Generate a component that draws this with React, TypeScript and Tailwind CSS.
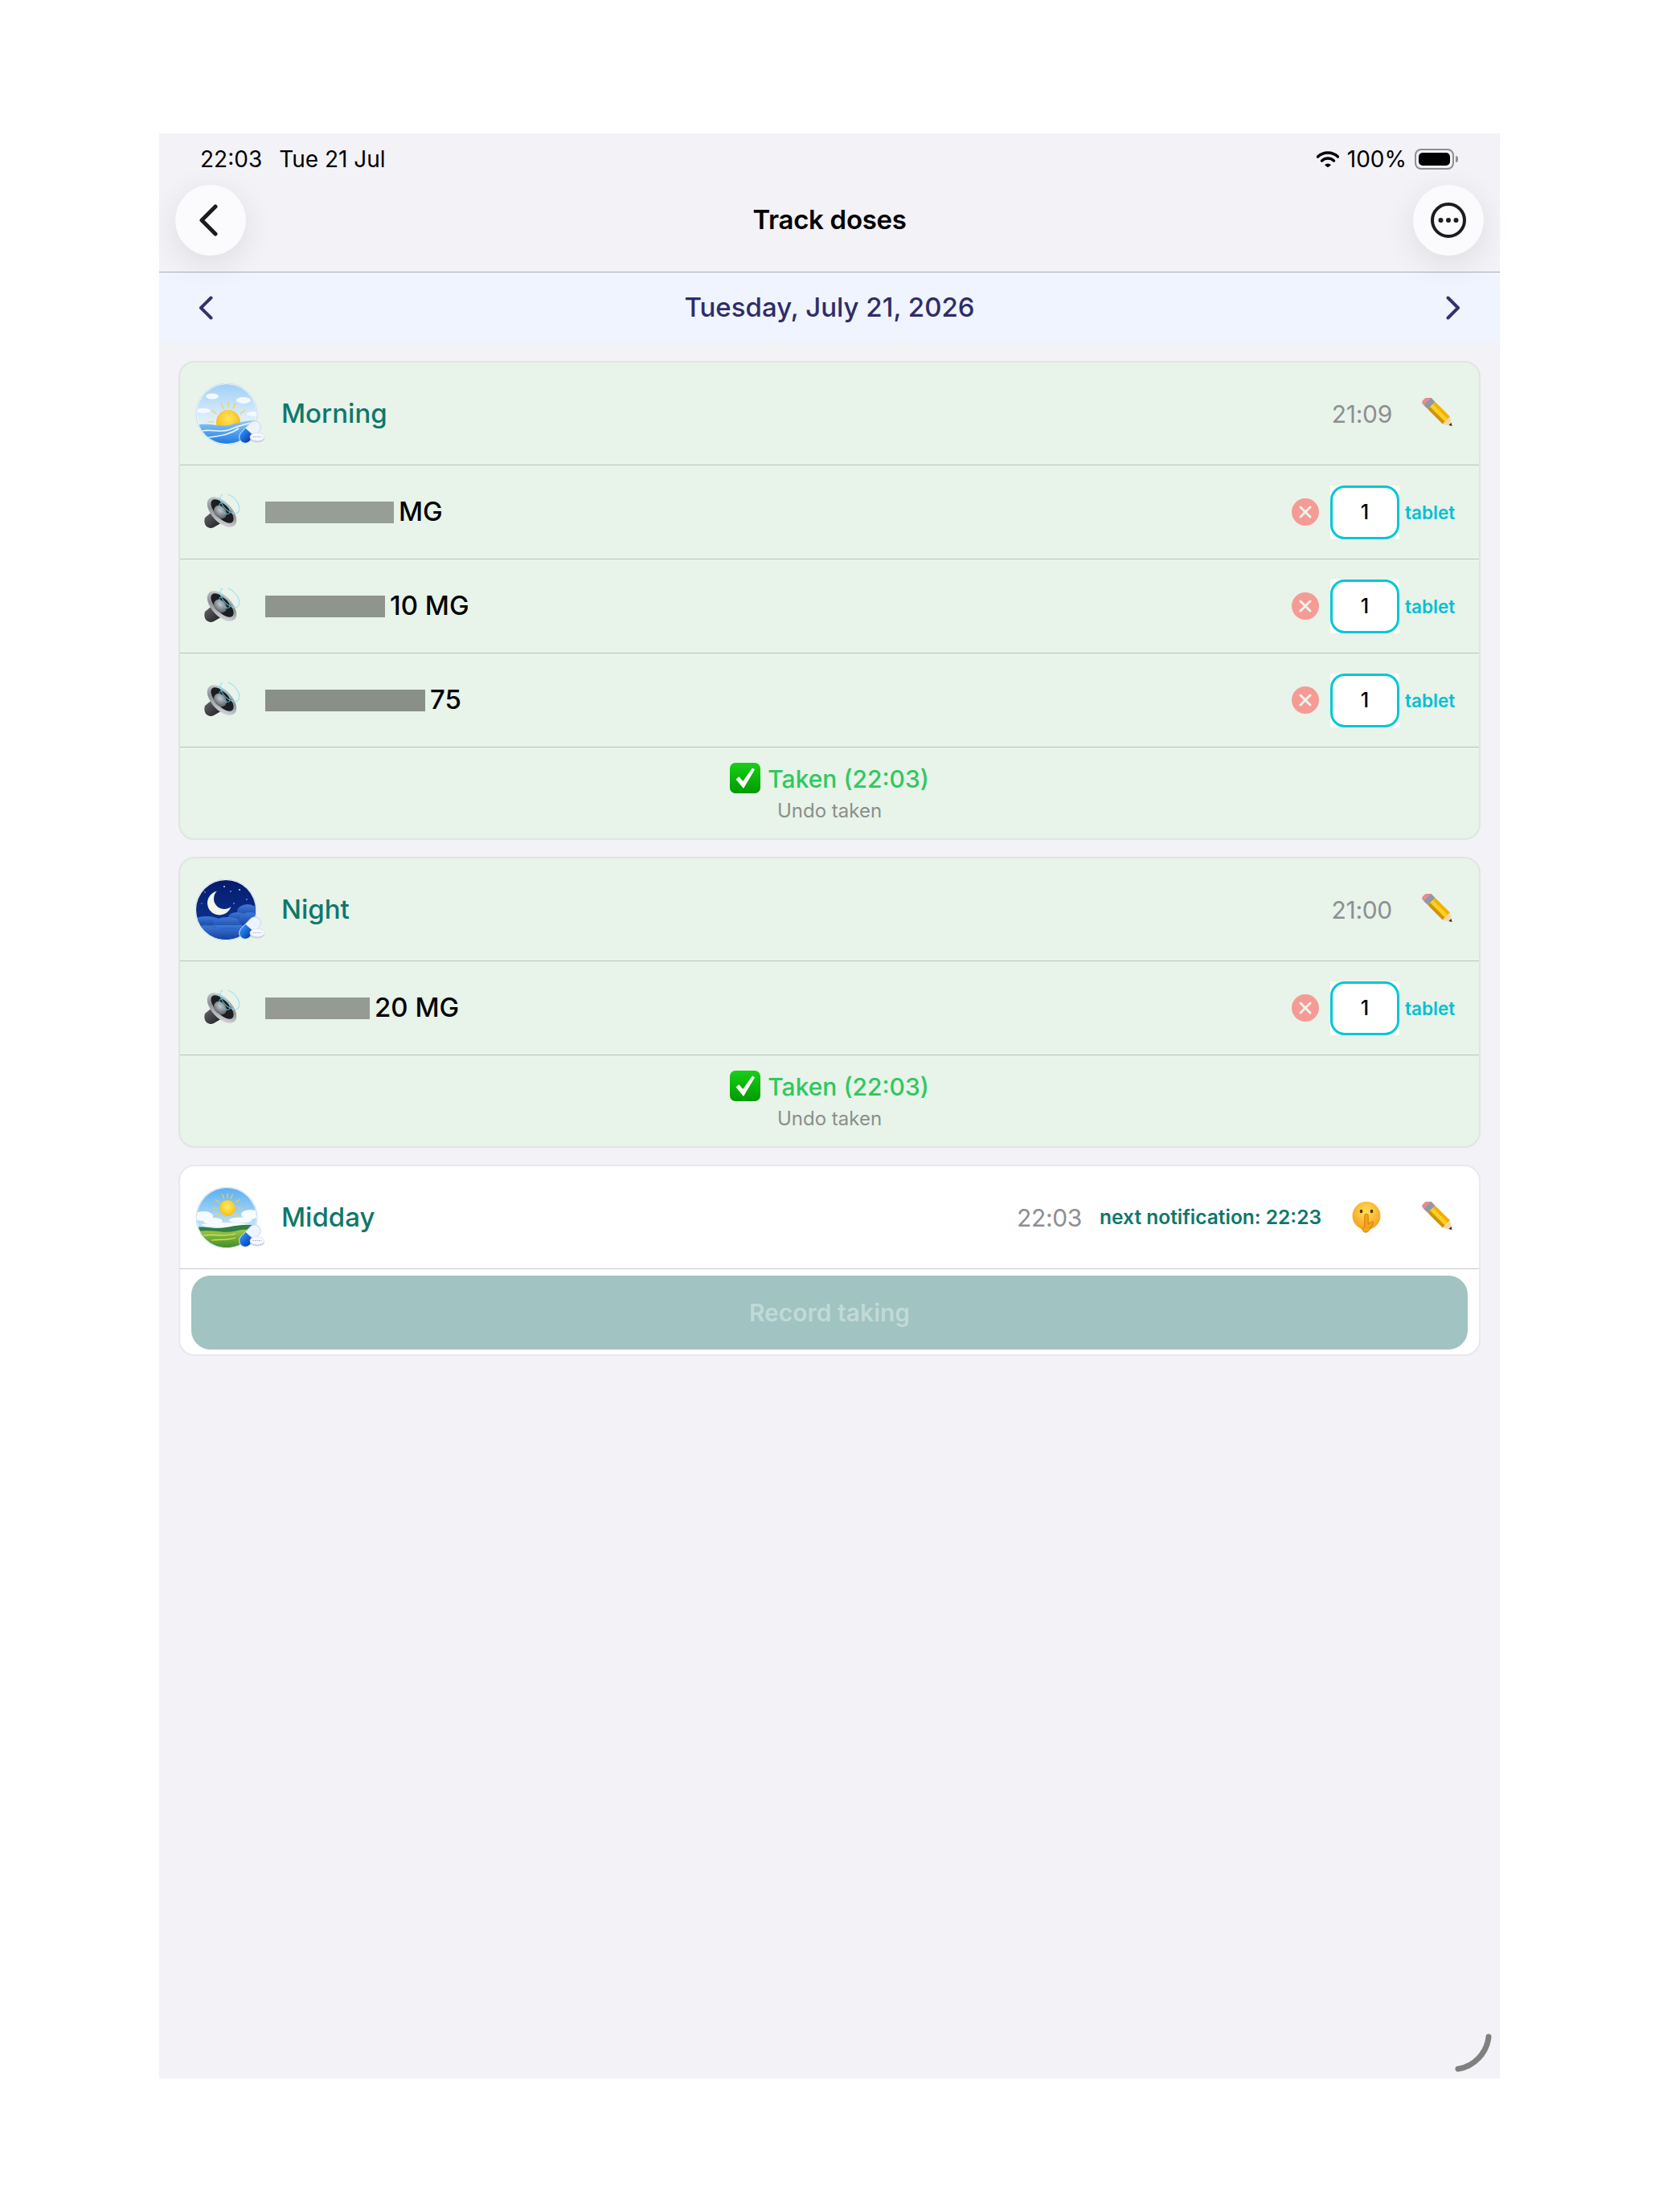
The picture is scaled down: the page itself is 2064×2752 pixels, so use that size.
import type { ReactNode } from 'react'

function Pills({ id }: { id: string }) {
  return (
    <g>
      <g transform="rotate(-47 68 60.5)">
        <rect x="52" y="53" width="32" height="15" rx="7.5" fill="#eef3fd" stroke="#bcd0f2" strokeWidth="0.8" />
        <path d="M59.5 53H68V68H59.5a7.5 7.5 0 0 1 0-15z" fill={`url(#${id}-cap)`} stroke="#fff" strokeWidth="0.6" />
      </g>
      <ellipse cx="77" cy="68.5" rx="9" ry="5" fill="#c6cfe6" />
      <ellipse cx="77" cy="66.5" rx="9" ry="5" fill="#f6f8fe" stroke="#d5dcf0" strokeWidth="0.6" />
      <path d="M71.5 66.5h11" stroke="#7f83d8" strokeWidth="0.7" strokeDasharray="1.6 1" />
      <defs>
        <linearGradient id={`${id}-cap`} x1="0" y1="0" x2="0" y2="1">
          <stop offset="0" stopColor="#2a8cf0" />
          <stop offset="1" stopColor="#0a3fb4" />
        </linearGradient>
      </defs>
    </g>
  )
}

function Rays({ cx, cy, inner, outer }: { cx: number; cy: number; inner: number; outer: number }) {
  const angles = [0, 35, 70, 110, 145, 180, 215, 250, 270, 290, 325]
  return (
    <g stroke="#f8cf3a" strokeWidth="1.2" strokeLinecap="round">
      {angles.map(a => {
        const r = (a * Math.PI) / 180
        return (
          <line
            key={a}
            x1={cx + Math.cos(r) * inner}
            y1={cy + Math.sin(r) * inner}
            x2={cx + Math.cos(r) * outer}
            y2={cy + Math.sin(r) * outer}
          />
        )
      })}
    </g>
  )
}

function MorningIcon() {
  return (
    <svg width="86" height="76" viewBox="0 0 86 76" className="shrink-0">
      <defs>
        <linearGradient id="m-sky" x1="0" y1="0" x2="0" y2="1">
          <stop offset="0" stopColor="#9ed0f5" />
          <stop offset="0.55" stopColor="#dcedfb" />
          <stop offset="1" stopColor="#fff2d6" />
        </linearGradient>
        <radialGradient id="m-sun" cx="0.5" cy="0.35" r="0.7">
          <stop offset="0" stopColor="#ffe85a" />
          <stop offset="1" stopColor="#f7ad0a" />
        </radialGradient>
        <linearGradient id="m-sea" x1="0" y1="0" x2="0" y2="1">
          <stop offset="0" stopColor="#8ccaf7" />
          <stop offset="1" stopColor="#1c78e0" />
        </linearGradient>
        <clipPath id="m-clip">
          <circle cx="39" cy="38" r="37" />
        </clipPath>
      </defs>
      <circle cx="39" cy="38" r="38" fill="#fff" stroke="#bcd6f5" strokeWidth="0.8" />
      <g clipPath="url(#m-clip)">
        <rect width="80" height="76" fill="url(#m-sky)" />
        <g fill="#f4f9fe">
          <ellipse cx="21" cy="16" rx="8" ry="3.5" />
          <ellipse cx="60" cy="21" rx="9" ry="4" />
          <ellipse cx="10" cy="34" rx="9" ry="3" />
          <ellipse cx="72" cy="38" rx="8" ry="3" />
        </g>
        <Rays cx={41} cy={48} inner={18} outer={25} />
        <circle cx="41" cy="48" r="15" fill="url(#m-sun)" />
        <path d="M0 53c14-6 30 2 42-1 14-4 24-6 38-6v30H0z" fill="url(#m-sea)" />
        <path d="M4 60c14-5 26 3 40-3 10-4 20-8 34-9M12 68c14-3 28-2 42-12" stroke="#eaf5fe" strokeWidth="1.6" fill="none" />
      </g>
      <Pills id="m" />
    </svg>
  )
}

function MiddayIcon() {
  return (
    <svg width="86" height="76" viewBox="0 0 86 76" className="shrink-0">
      <defs>
        <linearGradient id="d-sky" x1="0" y1="0" x2="0" y2="1">
          <stop offset="0" stopColor="#59aef0" />
          <stop offset="0.7" stopColor="#cfe8fa" />
        </linearGradient>
        <radialGradient id="d-sun" cx="0.5" cy="0.4" r="0.6">
          <stop offset="0" stopColor="#ffee6a" />
          <stop offset="1" stopColor="#fbbc0e" />
        </radialGradient>
        <linearGradient id="d-hill" x1="0" y1="0" x2="0" y2="1">
          <stop offset="0" stopColor="#a2c944" />
          <stop offset="1" stopColor="#3f8a2a" />
        </linearGradient>
        <clipPath id="d-clip">
          <circle cx="39" cy="38" r="37" />
        </clipPath>
      </defs>
      <circle cx="39" cy="38" r="38" fill="#fff" stroke="#bcd6f5" strokeWidth="0.8" />
      <g clipPath="url(#d-clip)">
        <rect width="80" height="76" fill="url(#d-sky)" />
        <Rays cx={40} cy={26} inner={13} outer={18} />
        <circle cx="40" cy="26" r="10" fill="url(#d-sun)" />
        <g fill="#f6fbff">
          <ellipse cx="10" cy="36" rx="12" ry="6" />
          <ellipse cx="22" cy="42" rx="12" ry="4" />
          <ellipse cx="68" cy="34" rx="11" ry="6" />
          <ellipse cx="56" cy="41" rx="14" ry="3.5" />
          <ellipse cx="38" cy="47" rx="30" ry="3" />
        </g>
        <path d="M0 50c12-2 24 3 38 0 12-2 24-5 42-2v28H0z" fill="#2f7d48" />
        <path d="M0 56c18-5 36 2 48-1 10-3 20-3 32-2v23H0z" fill="url(#d-hill)" />
        <path d="M10 60c14-2 26 2 40-2M20 66c10-1 20 0 30-3" stroke="#d9e85a" strokeWidth="1.2" fill="none" />
      </g>
      <Pills id="d" />
    </svg>
  )
}

function NightIcon() {
  return (
    <svg width="86" height="76" viewBox="0 0 86 76" className="shrink-0">
      <defs>
        <linearGradient id="n-sky" x1="0" y1="0" x2="0" y2="1">
          <stop offset="0" stopColor="#061a6b" />
          <stop offset="1" stopColor="#0d3a9e" />
        </linearGradient>
        <linearGradient id="n-cloud" x1="0" y1="0" x2="0" y2="1">
          <stop offset="0" stopColor="#3f78d6" />
          <stop offset="1" stopColor="#123f9f" />
        </linearGradient>
        <clipPath id="n-clip">
          <circle cx="38" cy="38" r="37" />
        </clipPath>
        <mask id="n-moon">
          <rect width="86" height="76" fill="#fff" />
          <circle cx="36" cy="24" r="13" fill="#000" />
        </mask>
      </defs>
      <circle cx="38" cy="38" r="38" fill="#fff" stroke="#bcd6f5" strokeWidth="0.8" />
      <g clipPath="url(#n-clip)">
        <rect width="80" height="76" fill="url(#n-sky)" />
        <g fill="#e8f0ff">
          <circle cx="36" cy="9" r="0.9" />
          <circle cx="44" cy="15" r="0.7" />
          <circle cx="55" cy="13" r="0.9" />
          <circle cx="64" cy="25" r="0.7" />
          <circle cx="48" cy="30" r="0.7" />
          <circle cx="12" cy="16" r="0.7" />
          <circle cx="8" cy="30" r="0.6" />
          <circle cx="58" cy="34" r="0.7" />
        </g>
        <circle cx="30" cy="29.5" r="15" fill="#f4f6e8" mask="url(#n-moon)" />
        <g fill="url(#n-cloud)">
          <ellipse cx="65" cy="40" rx="13" ry="9" />
          <ellipse cx="52" cy="47" rx="11" ry="6" />
          <ellipse cx="14" cy="53" rx="18" ry="7" />
          <ellipse cx="40" cy="55" rx="18" ry="8" />
          <ellipse cx="68" cy="50" rx="14" ry="9" />
          <rect x="0" y="57" width="80" height="19" />
        </g>
        <path d="M2 60c8-5 18-3 24 0M28 64c8-4 18-4 26-1" stroke="#2a62c6" strokeWidth="1.2" fill="none" />
      </g>
      <Pills id="n" />
    </svg>
  )
}

function SpeakerIcon() {
  return (
    <svg width="45" height="44" viewBox="0 0 45 44" className="shrink-0">
      <defs>
        <linearGradient id="sp-rim" x1="0" y1="0" x2="1" y2="1">
          <stop offset="0" stopColor="#dfe3e7" />
          <stop offset="0.5" stopColor="#8d9197" />
          <stop offset="1" stopColor="#eceef0" />
        </linearGradient>
        <linearGradient id="sp-mag" x1="0" y1="0" x2="1" y2="1">
          <stop offset="0" stopColor="#6b6d72" />
          <stop offset="1" stopColor="#17181b" />
        </linearGradient>
        <radialGradient id="sp-dome" cx="0.4" cy="0.4" r="0.6">
          <stop offset="0" stopColor="#c6cbd0" />
          <stop offset="1" stopColor="#62666c" />
        </radialGradient>
      </defs>
      <path d="M2 29 13 20 25 34 13 41a8 8 0 0 1-10-2c-2-3-2-7-1-10z" fill="url(#sp-mag)" />
      <ellipse cx="23" cy="22" rx="23" ry="12.5" transform="rotate(47 23 22)" fill="url(#sp-rim)" />
      <ellipse cx="23.5" cy="21" rx="18.5" ry="8.5" transform="rotate(47 23.5 21)" fill="#1d1e22" />
      <ellipse cx="21" cy="22" rx="9" ry="7" transform="rotate(47 21 22)" fill="url(#sp-dome)" />
      <ellipse cx="33" cy="11.5" rx="15" ry="8.5" transform="rotate(47 33 11.5)" fill="none" stroke="#7fdff0" strokeWidth="0.9" />
      <ellipse cx="26.5" cy="17.5" rx="8.5" ry="4.5" transform="rotate(47 26.5 17.5)" fill="none" stroke="#58cfe2" strokeWidth="0.9" />
    </svg>
  )
}

function PencilIcon() {
  return (
    <svg width="39" height="39" viewBox="0 0 39 39" className="shrink-0">
      <g transform="translate(4.5 1) rotate(45)">
        <rect x="0" y="-6.5" width="8" height="13" rx="3.5" fill="#e98a8d" />
        <rect x="5" y="-6.5" width="7" height="13" fill="#8f98a6" />
        <rect x="12" y="-6.5" width="26" height="4.4" fill="#f2b200" />
        <rect x="12" y="-2.1" width="26" height="4.4" fill="#ffcf1a" />
        <rect x="12" y="2.3" width="26" height="4.2" fill="#cf9400" />
        <polygon points="38,-6.5 38,6.5 48,0" fill="#f2d6a4" />
        <polygon points="44.6,-2.2 44.6,2.2 48,0" fill="#2b2b2b" />
      </g>
    </svg>
  )
}

function ShushIcon() {
  return (
    <svg width="38" height="39" viewBox="0 0 38 39" className="shrink-0">
      <defs>
        <radialGradient id="sh-face" cx="0.5" cy="0.35" r="0.7">
          <stop offset="0" stopColor="#ffdf5a" />
          <stop offset="1" stopColor="#f59a16" />
        </radialGradient>
      </defs>
      <circle cx="19" cy="17.5" r="17.5" fill="url(#sh-face)" />
      <ellipse cx="12.5" cy="12" rx="1.8" ry="2.3" fill="#5a3210" />
      <ellipse cx="25.5" cy="12" rx="1.8" ry="2.3" fill="#5a3210" />
      <path d="M16.8 32V17.5a2.2 2.2 0 0 1 4.4 0V28l4-3c1.6-1 3 .8 2 2.2L22 36c-1.6 2.6-5 3-7 .8-2-2.4-1.6-3.8 1.8-4.8z" fill="#f6a21c" stroke="#c66f08" strokeWidth="0.8" />
    </svg>
  )
}

function CheckEmoji() {
  return (
    <svg width="38" height="38" viewBox="0 0 38 38" className="shrink-0">
      <defs>
        <linearGradient id="ck" x1="0" y1="0" x2="0" y2="1">
          <stop offset="0" stopColor="#18d018" />
          <stop offset="1" stopColor="#009a00" />
        </linearGradient>
      </defs>
      <rect width="38" height="38" rx="7" fill="url(#ck)" />
      <path d="M7.5 20.5l4-3.2 4.8 5.7L28 6.5l3 2L17 32z" fill="#fff" />
    </svg>
  )
}

function Chevron({ dir, className }: { dir: 'left' | 'right'; className: string }) {
  return (
    <svg viewBox="0 0 18 30" width="18" height="30" fill="none" className={className}>
      <path
        d={dir === 'left' ? 'M15.5 2.5 3 15l12.5 12.5' : 'M2.5 2.5 15 15 2.5 27.5'}
        stroke="#35316f"
        strokeWidth="4"
        strokeLinecap="round"
        strokeLinejoin="round"
      />
    </svg>
  )
}

function Card({ children, done }: { children: ReactNode; done: boolean }) {
  return (
    <section
      className={done
        ? 'rounded-[20px] border-2 border-[#dfe6e1] bg-[#e8f3e9] overflow-hidden'
        : 'rounded-[20px] border-2 border-[#e8e8ed] bg-white overflow-hidden'}
    >
      {children}
    </section>
  )
}

function SlotHeader({ icon, name, time, extra }: { icon: ReactNode; name: string; time: string; extra?: ReactNode }) {
  return (
    <div className="flex h-[127px] items-center pl-[19px] pr-[33px]">
      {icon}
      <span className="ml-[21px] flex-1 text-[33px] font-medium text-[#0f776b]">{name}</span>
      <span className="text-[30px] leading-none tracking-[-0.3px] text-[#8e8e93]">{time}</span>
      {extra}
      <span className={extra ? 'ml-[49px]' : 'ml-[36px]'}>
        <PencilIcon />
      </span>
    </div>
  )
}

function DoseRow({ barWidth, barColor, label }: { barWidth: number; barColor: string; label: string }) {
  return (
    <div className="flex h-[117px] items-center border-t border-[#b7c2b9] pl-[29px] pr-[29px]">
      <SpeakerIcon />
      <div className="ml-[32px] flex flex-1 items-center gap-[6px] text-[33px] font-medium text-black">
        <span className="h-[27px] block" style={{ width: barWidth, backgroundColor: barColor }} />
        <span>{label}</span>
      </div>
      <span className="flex size-[34px] items-center justify-center rounded-full bg-[#f59b96]">
        <svg width="16" height="16" viewBox="0 0 16 16" fill="none">
          <path d="M2 2l12 12M14 2 2 14" stroke="#edf3ea" strokeWidth="3" strokeLinecap="round" />
        </svg>
      </span>
      <span className="ml-[14px] bg-white">
        <span className="flex h-[67px] w-[86px] items-center justify-center rounded-[18px] border-[3px] border-[#00c7d6] bg-white pt-[2px] text-[25px] font-medium text-black">
          1
        </span>
      </span>
      <span className="ml-[7px] w-[63px] pt-[2px] text-[22.5px] font-semibold text-[#00c0d2]">tablet</span>
    </div>
  )
}

function TakenFooter() {
  return (
    <div className="flex h-[114px] flex-col items-center border-t border-[#b7c2b9] pt-[19px]">
      <div className="flex h-[38px] items-center gap-[9px]">
        <CheckEmoji />
        <span className="pt-[2px] text-[30px] font-medium text-[#30c85e]">Taken (22:03)</span>
      </div>
      <span className="mt-[6px] text-[24px] leading-[32px] text-[#8a8f8a]">Undo taken</span>
    </div>
  )
}

export default function App() {
  return (
    <div className="h-[2752px] w-full bg-white pl-[198px] pt-[166px] font-['Inter',sans-serif]">
      <div className="relative h-[2420px] w-[1668px] bg-[#f2f2f7]">
        <header className="relative z-10 border-b border-[#a9a9b3]">
          <div className="flex h-[64px] items-center justify-between pl-[51px] pr-[52px] text-[28px] text-black">
            <div className="flex gap-[21px]">
              <span>22:03</span>
              <span>Tue 21 Jul</span>
            </div>
            <div className="flex items-center">
              <svg width="28" height="20" viewBox="0 0 28 20" fill="none">
                <path d="M1.5 7a18 18 0 0 1 25 0" stroke="#000" strokeWidth="3.4" strokeLinecap="round" />
                <path d="M6.5 12a11 11 0 0 1 15 0" stroke="#000" strokeWidth="3.4" strokeLinecap="round" />
                <path d="M10 17.2a5.6 5.6 0 0 1 8 0L14 20.4z" fill="#000" />
              </svg>
              <span className="ml-[10px]">100%</span>
              <span className="ml-[10px] flex h-[26px] w-[49px] items-center rounded-[8px] border-2 border-[#8e8e93] p-[3px]">
                <span className="h-full w-full rounded-[5px] bg-black" />
              </span>
              <span className="ml-[2px] h-[8px] w-[3px] rounded-r-full bg-[#8e8e93]" />
            </div>
          </div>
          <div className="flex h-[88px] items-center justify-between px-[20px]">
            <button className="flex size-[88px] items-center justify-center rounded-full bg-[#fbfbfd] shadow-[0_10px_40px_rgba(0,0,0,0.09)]">
              <svg width="26" height="40" viewBox="0 0 26 40" fill="none" className="mr-[7px]">
                <path d="M22 3 5 20l17 17" stroke="#1c1c1e" strokeWidth="5" strokeLinecap="round" strokeLinejoin="round" />
              </svg>
            </button>
            <h1 className="flex-1 text-center text-[33px] font-semibold tracking-[-0.3px] text-black">Track doses</h1>
            <button className="flex size-[88px] items-center justify-center rounded-full bg-[#fbfbfd] shadow-[0_10px_40px_rgba(0,0,0,0.09)]">
              <svg width="44" height="44" viewBox="0 0 44 44" fill="none">
                <circle cx="22" cy="22" r="20" stroke="#1c1c1e" strokeWidth="4" />
                <circle cx="12.5" cy="22" r="3" fill="#1c1c1e" />
                <circle cx="22" cy="22" r="3" fill="#1c1c1e" />
                <circle cx="31.5" cy="22" r="3" fill="#1c1c1e" />
              </svg>
            </button>
          </div>
          <div className="h-[20px]" />
        </header>

        <div className="flex h-[87px] items-center justify-between bg-[#f0f4fe] px-[49px]">
          <Chevron dir="left" className="shrink-0" />
          <span className="text-[33px] font-medium text-[#2f2d66]">Tuesday, July 21, 2026</span>
          <Chevron dir="right" className="shrink-0" />
        </div>

        <main className="flex flex-col gap-[21px] px-[24px] pt-[23px]">
          <Card done>
            <SlotHeader icon={<MorningIcon />} name="Morning" time="21:09" />
            <DoseRow barWidth={160} barColor="#979e95" label="MG" />
            <DoseRow barWidth={149} barColor="#8f958d" label="10 MG" />
            <DoseRow barWidth={199} barColor="#8a8f88" label="75" />
            <TakenFooter />
          </Card>

          <Card done>
            <SlotHeader icon={<NightIcon />} name="Night" time="21:00" />
            <DoseRow barWidth={130} barColor="#959b92" label="20 MG" />
            <TakenFooter />
          </Card>

          <Card done={false}>
            <SlotHeader
              icon={<MiddayIcon />}
              name="Midday"
              time="22:03"
              extra={
                <>
                  <span className="ml-[22px] text-[24.5px] font-semibold text-[#0f776b]">next notification: 22:23</span>
                  <span className="ml-[37px]">
                    <ShushIcon />
                  </span>
                </>
              }
            />
            <div className="border-t border-[#c9c9ce] px-[14px] pb-[6px] pt-[8px]">
              <button className="h-[92px] w-full rounded-[24px] bg-[#a1c3c1] text-[30px] font-semibold text-[#c0dad7]">
                Record taking
              </button>
            </div>
          </Card>
        </main>

        <svg width="52" height="52" viewBox="0 0 52 52" fill="none" className="absolute bottom-[6px] right-[7px]">
          <path d="M45 6C43 26 27 43 7 46" stroke="#808080" strokeWidth="7" strokeLinecap="round" />
        </svg>
      </div>
    </div>
  )
}
